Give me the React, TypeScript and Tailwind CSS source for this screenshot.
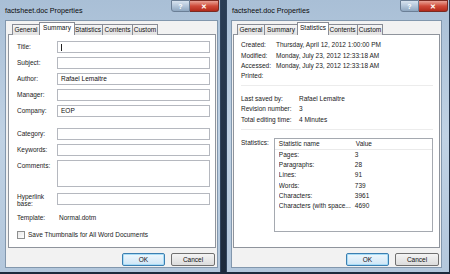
import React from "react";

const font = { fontFamily: '"Liberation Sans", Arial, sans-serif' };

function TitleBar({ title }: { title: string }) {
  return (
    <div className="h-[20px] flex items-start justify-between shrink-0">
      <div className="pl-[5px] pt-[6px] text-[7.2px] leading-[9px] text-[#0b0b0b]">{title}</div>
      <div className="flex items-start pr-[1px]">
        <div className="w-[19px] h-[12px] rounded-bl-[3px] border border-[#6b7f96] bg-gradient-to-b from-[#d8e3ef] via-[#b3c6da] to-[#8fa7c0] flex items-center justify-center text-white text-[7px] font-bold leading-none">
          ?
        </div>
        <div className="w-[29px] h-[12px] rounded-br-[3px] border border-[#7a2a22] border-l-0 bg-gradient-to-b from-[#e8a196] via-[#cf4a3a] to-[#b3291a] flex items-center justify-center text-white text-[7px] font-bold leading-none">
          ✕
        </div>
      </div>
    </div>
  );
}

function Tabs({ selected }: { selected: number }) {
  const tabs = [
    { t: "General", w: 28 },
    { t: "Summary", w: 34 },
    { t: "Statistics", w: 30 },
    { t: "Contents", w: 31 },
    { t: "Custom", w: 26 },
  ];
  return (
    <div className="flex items-end h-[13px] pl-[4px] relative z-10">
      {tabs.map((tb, i) =>
        i === selected ? (
          <div
            key={tb.t}
            style={{ width: tb.w + 2 }}
            className="h-[13px] -mx-[1px] bg-white border border-[#898c95] border-b-0 text-[6.5px] leading-[10px] text-center text-[#111] z-10"
          >
            {tb.t}
          </div>
        ) : (
          <div
            key={tb.t}
            style={{ width: tb.w }}
            className="h-[11px] mb-[0px] bg-gradient-to-b from-[#f5f5f5] to-[#e1e1e1] border border-[#898c95] border-b-0 -ml-[1px] first:ml-0 text-[6.5px] leading-[10px] text-center text-[#111]"
          >
            {tb.t}
          </div>
        )
      )}
    </div>
  );
}

function Buttons() {
  return (
    <div className="flex justify-end gap-[6px] mt-[5px] pr-[1px]">
      <div className="w-[43px] h-[13px] rounded-[2px] border border-[#3c7fb1] bg-gradient-to-b from-[#eef7fd] to-[#cfe6f6] shadow-[inset_0_0_0_1px_#a8dcf6] text-[6.5px] leading-[11px] text-center text-[#111]">
        OK
      </div>
      <div className="w-[44px] h-[13px] rounded-[2px] border border-[#707070] bg-gradient-to-b from-[#f4f4f4] to-[#dcdcdc] text-[6.5px] leading-[11px] text-center text-[#111]">
        Cancel
      </div>
    </div>
  );
}

function Field({ label, value, h = 12, mt = 4 }: { label: React.ReactNode; value?: string; h?: number; mt?: number }) {
  return (
    <div className="flex items-start" style={{ marginTop: mt }}>
      <div className="w-[40px] text-[6.5px] leading-[12px] text-[#1a1a1a] pl-[0px]">{label}</div>
      <div
        style={{ height: h }}
        className="w-[153px] border border-[#b5b8bf] bg-white text-[6.5px] leading-[10px] pl-[3px] text-[#111]"
      >
        {value}
      </div>
    </div>
  );
}

function LeftWindow() {
  return (
    <div className="w-[221px] h-[272px] flex flex-col bg-gradient-to-b from-[#a9bfd6] via-[#c0d2e4] to-[#b3c7dc] border-r border-[#2f435c] shrink-0">
      <TitleBar title="factsheet.doc Properties" />
      <div className="ml-[5px] mr-[2px] h-[248px] bg-[#f2f2f2] border border-[#8297ad] pt-[0px] pl-[2px] pr-[1px]">
        <div className="pt-[1px]">
          <Tabs selected={1} />
        </div>
        <div className="h-[214px] -mt-[1px] bg-white border border-[#8f949c] pl-[8px] pt-[6px]">
          <div className="flex items-start" style={{ marginTop: 0 }}>
            <div className="w-[40px] text-[6.5px] leading-[12px] text-[#1a1a1a]">Title:</div>
            <div className="w-[153px] h-[12px] border border-[#b5b8bf] bg-white pl-[3px] pt-[2px]">
              <div className="w-[1px] h-[7px] bg-[#222]" />
            </div>
          </div>
          <Field label="Subject:" />
          <Field label="Author:" value="Rafael Lemaitre" />
          <Field label="Manager:" />
          <Field label="Company:" value="EOP" />
          <Field label="Category:" mt={11} />
          <Field label="Keywords:" />
          <Field label="Comments:" h={27} />
          <div className="flex items-start mt-[6px]">
            <div className="w-[40px] text-[6.5px] leading-[7px] text-[#1a1a1a] pt-[0px]">
              Hyperlink
              <br />
              base:
            </div>
            <div className="w-[153px] h-[12px] border border-[#b5b8bf] bg-white" />
          </div>
          <div className="flex items-center mt-[6px] h-[10px]">
            <div className="w-[40px] text-[6.5px] leading-[10px] text-[#1a1a1a]">Template:</div>
            <div className="text-[6.5px] leading-[10px] text-[#1a1a1a] pl-[2px]">Normal.dotm</div>
          </div>
          <div className="flex items-center mt-[7px] h-[9px]">
            <div className="w-[8px] h-[8px] border border-[#8e8f8f] bg-gradient-to-br from-[#e8e8e8] to-[#ffffff]" />
            <div className="text-[6.5px] leading-[9px] text-[#1a1a1a] pl-[3px]">Save Thumbnails for All Word Documents</div>
          </div>
        </div>
        <Buttons />
      </div>
    </div>
  );
}

function KV({ k, v, kw }: { k: string; v?: string; kw: number }) {
  return (
    <div className="flex h-[10.4px] items-center text-[6.5px] leading-[10px] text-[#1a1a1a]">
      <div style={{ width: kw }}>{k}</div>
      <div>{v}</div>
    </div>
  );
}

function RightWindow() {
  const stats: [string, string][] = [
    ["Pages:", "3"],
    ["Paragraphs:", "28"],
    ["Lines:", "91"],
    ["Words:", "739"],
    ["Characters:", "3961"],
    ["Characters (with space...", "4690"],
  ];
  return (
    <div className="w-[223px] h-[272px] flex flex-col bg-gradient-to-b from-[#a9bfd6] via-[#c0d2e4] to-[#b3c7dc] border-l border-[#2f435c] shrink-0">
      <TitleBar title="factsheet.doc Properties" />
      <div className="ml-[4px] mr-[7px] h-[248px] bg-[#f2f2f2] border border-[#8297ad] pl-[1px] pr-[1px]">
        <div className="pt-[1px]">
          <Tabs selected={2} />
        </div>
        <div className="h-[214px] -mt-[1px] bg-white border border-[#8f949c] pl-[7px] pt-[5px] pr-[6px]">
          <KV k="Created:" v="Thursday, April 12, 2012 1:00:00 PM" kw={35} />
          <KV k="Modified:" v="Monday, July 23, 2012 12:33:18 AM" kw={35} />
          <KV k="Accessed:" v="Monday, July 23, 2012 12:33:18 AM" kw={35} />
          <KV k="Printed:" kw={35} />
          <div className="h-px bg-[#ececec] mt-[3px] mb-[8px]" />
          <KV k="Last saved by:" v="Rafael Lemaitre" kw={58} />
          <KV k="Revision number:" v="3" kw={58} />
          <KV k="Total editing time:" v="4 Minutes" kw={58} />
          <div className="h-px bg-[#ececec] mt-[4px] mb-[8px]" />
          <div className="flex items-start">
            <div className="w-[33px] text-[6.5px] leading-[9px] text-[#1a1a1a] pt-[0px]">Statistics:</div>
            <div className="w-[160px] h-[94px] border border-[#a5a9b0] bg-white">
              <div className="flex h-[11px] items-center text-[6.5px] text-[#1a1a1a] border-b border-[#eaeaea] pl-[4px]">
                <div className="w-[76px]">Statistic name</div>
                <div className="w-[60px] border-l border-transparent">Value</div>
              </div>
              <div className="pt-[0px]">
                {stats.map(([a, b]) => (
                  <div key={a} className="flex h-[10.2px] items-center text-[6.5px] text-[#1a1a1a] pl-[4px]">
                    <div className="w-[76px] whitespace-nowrap overflow-hidden">{a}</div>
                    <div>{b}</div>
                  </div>
                ))}
              </div>
            </div>
          </div>
        </div>
        <Buttons />
      </div>
    </div>
  );
}

export default function App() {
  return (
    <div style={font} className="w-[450px] h-[274px] overflow-hidden bg-gradient-to-b from-[#2a3d55] to-[#1c2a3c] flex gap-[5px]">
      <LeftWindow />
      <RightWindow />
    </div>
  );
}
